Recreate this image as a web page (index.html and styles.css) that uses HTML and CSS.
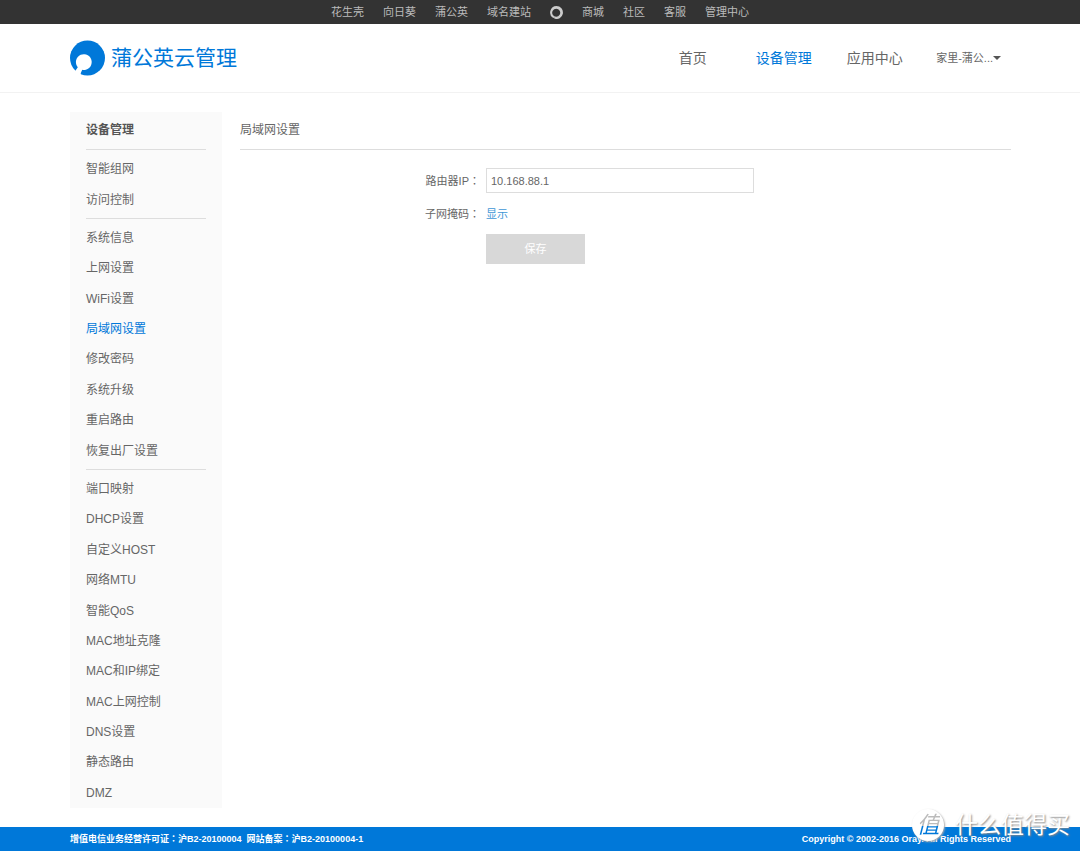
FILE: index.html
```html
<!DOCTYPE html>
<html lang="zh-CN">
<head>
<meta charset="utf-8">
<meta name="viewport" content="width=device-width, initial-scale=1">
<title>蒲公英云管理</title>
<link rel="stylesheet" href="styles.css">
</head>
<body>
<nav class="topbar" aria-label="站点">
  <a href="#">花生壳</a>
  <a href="#">向日葵</a>
  <a href="#">蒲公英</a>
  <a href="#">域名建站</a>
  <a class="topbar-logo" href="#" aria-label="Oray">
    <svg viewBox="0 0 13 13" width="13" height="13"><path fill="#ccc" fill-rule="evenodd" d="M6.500 0a6.500 6.500 0 1 1-2.300 12.600L4.300 11.500L3.200 12A6.500 6.500 0 0 1 6.500 0ZM6.200 2.800a4 4 0 1 0 .01 0Z"/></svg>
  </a>
  <a href="#">商城</a>
  <a href="#">社区</a>
  <a href="#">客服</a>
  <a href="#">管理中心</a>
</nav>

<header class="header">
  <div class="container header-row">
    <a class="brand" href="#">
      <svg viewBox="0 0 36 36" width="36" height="36" aria-hidden="true">
        <circle cx="17.500" cy="18" r="17.500" fill="#0078d9"/>
        <path fill="#fff" d="M7.800 27.200A7.900 7.900 0 1 1 12.200 29.800L10.800 33L10.500 36H7L4.500 32Z"/>
      </svg>
      <span>蒲公英云管理</span>
    </a>
    <nav class="nav" aria-label="主导航">
      <a class="nav-link" href="#">首页</a>
      <a class="nav-link active" href="#">设备管理</a>
      <a class="nav-link" href="#">应用中心</a>
      <button class="account" type="button">家里-蒲公...<span class="caret"></span></button>
    </nav>
  </div>
</header>

<div class="container page">
  <aside class="sidebar">
    <h2 class="sidebar-title">设备管理</h2>
    <ul class="menu menu-network">
      <li><a href="#">智能组网</a></li>
      <li><a href="#">访问控制</a></li>
    </ul>
    <ul class="menu menu-system">
      <li><a href="#">系统信息</a></li>
      <li><a href="#">上网设置</a></li>
      <li><a href="#">WiFi设置</a></li>
      <li><a class="active" href="#">局域网设置</a></li>
      <li><a href="#">修改密码</a></li>
      <li><a href="#">系统升级</a></li>
      <li><a href="#">重启路由</a></li>
      <li><a href="#">恢复出厂设置</a></li>
    </ul>
    <ul class="menu menu-advanced">
      <li><a href="#">端口映射</a></li>
      <li><a href="#">DHCP设置</a></li>
      <li><a href="#">自定义HOST</a></li>
      <li><a href="#">网络MTU</a></li>
      <li><a href="#">智能QoS</a></li>
      <li><a href="#">MAC地址克隆</a></li>
      <li><a href="#">MAC和IP绑定</a></li>
      <li><a href="#">MAC上网控制</a></li>
      <li><a href="#">DNS设置</a></li>
      <li><a href="#">静态路由</a></li>
      <li><a href="#">DMZ</a></li>
    </ul>
  </aside>
  <main class="content">
    <h1 class="content-title">局域网设置</h1>
    <form class="form">
      <label for="router-ip">路由器IP<span class="colon" lang="zh-TW">：</span></label>
      <input id="router-ip" type="text" value="10.168.88.1">
      <span class="label">子网掩码<span class="colon" lang="zh-TW">：</span></span>
      <a class="show" href="#">显示</a>
      <button class="save" type="button">保存</button>
    </form>
  </main>
</div>

<footer class="footer">
  <div class="container footer-row">
    <span>增值电信业务经营许可证<span class="colon" lang="zh-TW">：</span>沪B2-20100004&nbsp; 网站备案<span class="colon" lang="zh-TW">：</span>沪B2-20100004-1</span>
    <span>Copyright © 2002-2016 Oray. All Rights Reserved</span>
  </div>
  <div class="watermark">
    <span class="watermark-badge"><span>值</span></span>
    <span>什么值得买</span>
  </div>
</footer>
</body>
</html>
```

FILE: styles.css
```css
* {
  box-sizing: border-box;
}

body {
  display: flex;
  flex-direction: column;
  min-height: 100vh;
  margin: 0;
  background: #fff;
  color: #666;
  font: 12px/20px "Liberation Sans", "Noto Sans CJK SC", sans-serif;
}

a {
  color: inherit;
  text-decoration: none;
}

button,
input {
  font: inherit;
  color: inherit;
}

h1,
h2,
ul {
  margin: 0;
  padding: 0;
}

.container {
  width: 100%;
  padding: 0 69px 0 70px;
}

.colon {
  font-family: "Noto Sans CJK TC", sans-serif;
}

.topbar {
  display: flex;
  justify-content: center;
  align-items: center;
  gap: 19px;
  height: 24px;
  background: #333;
  color: #bbb;
  font-size: 11px;
}

.topbar-logo {
  display: flex;
}

.header {
  border-bottom: 1px solid #f2f2f2;
}

.header-row {
  display: flex;
  justify-content: space-between;
  align-items: center;
  height: 68px;
}

.brand {
  display: flex;
  align-items: center;
  gap: 5px;
  color: #0078d9;
  font-size: 21px;
  font-weight: 400;
}

.nav {
  display: flex;
  align-items: center;
  font-size: 14px;
}

.nav-link {
  width: 91px;
  text-align: center;
}

.nav .active {
  color: #0078d9;
}

.account {
  display: flex;
  align-items: center;
  margin-left: 16px;
  padding: 0 10px 0 0;
  border: 0;
  background: none;
  font-size: 11px;
}

.caret {
  border: 4px solid transparent;
  border-top-color: #555;
  border-bottom: 0;
}

.page {
  display: flex;
  flex: 1;
  gap: 18px;
  padding-top: 19px;
  padding-bottom: 19px;
}

.sidebar {
  display: flex;
  flex-direction: column;
  width: 152px;
  padding: 0 16px;
  background: #fafafa;
}

.sidebar-title {
  font-size: 12px;
  line-height: 37px;
  color: #555;
}

.menu {
  display: flex;
  flex-direction: column;
  padding: 4px 0 3px;
  border-top: 1px solid #ddd;
  list-style: none;
}

.menu li {
  display: flex;
  flex: 1 1 30px;
  align-items: center;
}

.menu-network {
  flex: 2 0 auto;
}

.menu-system {
  flex: 8 0 auto;
}

.menu-advanced {
  flex: 11 0 auto;
  padding-bottom: 0;
}

.menu .active {
  color: #0078d9;
}

.content {
  flex: 1;
}

.content-title {
  border-bottom: 1px solid #ddd;
  font-size: 12px;
  font-weight: 400;
  line-height: 37px;
}

.form {
  display: grid;
  grid-template-columns: 240px 1fr;
  align-items: center;
  justify-items: start;
  column-gap: 6px;
  row-gap: 10px;
  padding-top: 18px;
  font-size: 11px;
}

.form label,
.form .label {
  justify-self: end;
}

.form input {
  width: 268px;
  height: 25px;
  padding: 0 4px;
  border: 1px solid #ddd;
  background: #fff;
}

.show {
  color: #3f97d6;
}

.save {
  grid-column: 2;
  width: 99px;
  height: 30px;
  border: 0;
  background: #d8d8d8;
  color: #fff;
}

.footer {
  position: relative;
  background: #0078d9;
  color: #fff;
  font-size: 9px;
  font-weight: 700;
  line-height: 24px;
}

.footer-row {
  display: flex;
  justify-content: space-between;
}

.watermark {
  position: absolute;
  right: 10px;
  bottom: 10px;
  display: flex;
  align-items: center;
  gap: 11px;
  font-size: 23px;
  font-weight: 400;
  line-height: 32px;
  text-shadow: 1px 1px 2px #888;
}

.watermark-badge {
  width: 32px;
  height: 32px;
  border-radius: 50%;
  background: #fff;
  box-shadow: 1px 1px 2px #aaa;
  text-align: center;
  text-shadow: none;
}

.watermark-badge span {
  background: linear-gradient(#bbb 55%, #0078d9 55%);
  background-clip: text;
  color: transparent;
  font-style: italic;
}
```
